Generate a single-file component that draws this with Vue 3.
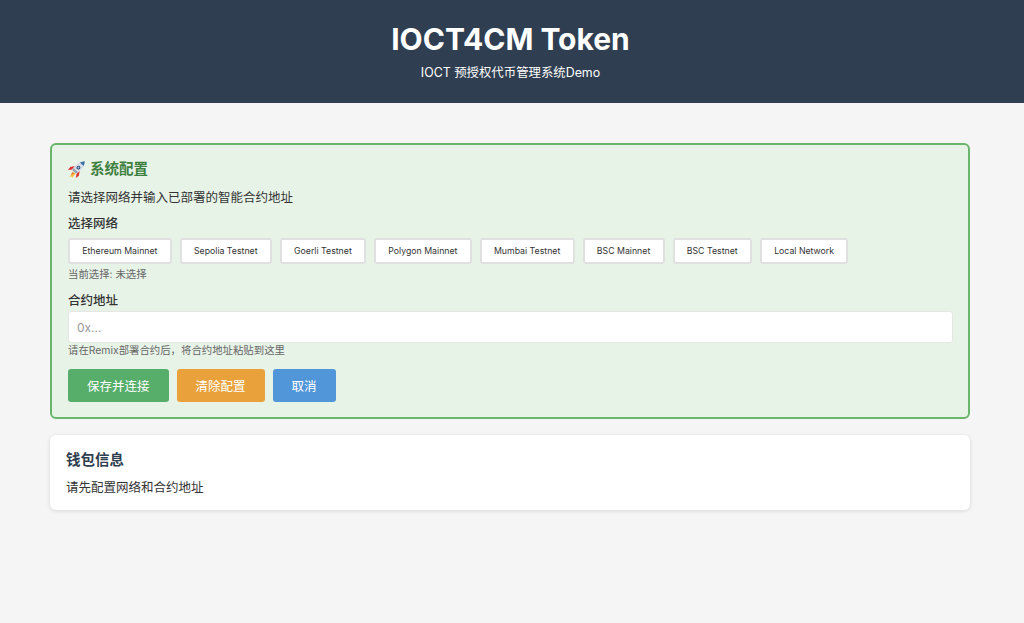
<script setup>
const networks = [
  'Ethereum Mainnet',
  'Sepolia Testnet',
  'Goerli Testnet',
  'Polygon Mainnet',
  'Mumbai Testnet',
  'BSC Mainnet',
  'BSC Testnet',
  'Local Network',
];
</script>

<template>
  <div class="page">
    <header class="header">
      <h1>IOCT4CM Token</h1>
      <p>IOCT 预授权代币管理系统Demo</p>
    </header>

    <main class="content">
      <section class="card config">
        <h2 class="config-title">
          <svg class="rocket" viewBox="0 0 16 16" width="17" height="17" aria-hidden="true">
            <path d="M4.6 10.2 1.4 15.4l2.2-.7.4 1 3.2-4z" fill="#f7c04a" />
            <path d="M4.3 10.4 2.6 13.4l3-1.6z" fill="#ee6a2c" />
            <path d="M6.4 4.8 2.2 5.6 0 8.4l3.8-.3z" fill="#dc2f2a" />
            <path d="M11 9.4 10.2 13.8 7.4 16l.6-3.8z" fill="#dc2f2a" />
            <path d="M15.8.2c-3.8.2-6.8 1.8-9 4.6L4 8.4l3.6 3.6 3.6-2.8c2.8-2.2 4.4-5.2 4.6-9z" fill="#d5dce6" />
            <path d="M15.8.2c-1.7.1-3.2.5-4.6 1.1l3.5 3.5c.6-1.4 1-2.9 1.1-4.6z" fill="#3f6ea8" />
            <path d="M5.4 6.8 4 8.4l3.6 3.6 1.6-1.3z" fill="#93a1b5" />
            <circle cx="9.8" cy="6.2" r="1.8" fill="#2c3f5a" />
            <circle cx="9.8" cy="6.2" r="1.05" fill="#86c3f0" />
          </svg>
          <span>系统配置</span>
        </h2>
        <p class="intro">请选择网络并输入已部署的智能合约地址</p>

        <div class="field">
          <label class="label">选择网络</label>
          <div class="networks">
            <button v-for="name in networks" :key="name" class="network-btn">{{ name }}</button>
          </div>
          <div class="hint">当前选择: 未选择</div>
        </div>

        <div class="field">
          <label class="label">合约地址</label>
          <input class="address" type="text" placeholder="0x..." />
          <div class="hint">请在Remix部署合约后，将合约地址粘贴到这里</div>
        </div>

        <div class="actions">
          <button class="action save">保存并连接</button>
          <button class="action clear">清除配置</button>
          <button class="action cancel">取消</button>
        </div>
      </section>

      <section class="card wallet">
        <h2>钱包信息</h2>
        <p>请先配置网络和合约地址</p>
      </section>
    </main>
  </div>
</template>

<style>
html,
body {
  margin: 0;
  background: #f5f5f5;
}
</style>

<style scoped>
.page {
  min-height: 623px;
  background: #f5f5f5;
  color: #333;
  font-family: Inter, "Liberation Sans", "Noto Sans CJK SC", sans-serif;
}

.header {
  height: 103px;
  box-sizing: border-box;
  padding: 20px 3px 0 0;
  background: #2f3e50;
  color: #fff;
  text-align: center;
}

.header h1 {
  margin: 0;
  font-size: 30px;
  line-height: 39px;
  font-weight: 700;
}

.header p {
  margin: 6px 0 0;
  font-size: 12.4px;
  line-height: 15px;
}

.content {
  display: flex;
  flex-direction: column;
  gap: 16px;
  padding: 40px 54px 0 50px;
}

.card {
  border-radius: 6px;
  box-sizing: border-box;
}

.config {
  height: 276px;
  padding: 15px 15px 0 16px;
  background: #e8f3e8;
  border: 2px solid #6ab56c;
}

.config-title {
  display: flex;
  align-items: center;
  gap: 5px;
  margin: 0 0 11px;
  font-size: 14.5px;
  line-height: 18px;
  font-weight: 700;
  color: #3d7f3f;
}

.rocket {
  flex: none;
}

.intro {
  margin: 0 0 9px;
  font-size: 12.5px;
  line-height: 18px;
}

.field {
  margin-bottom: 11px;
}

.label {
  display: block;
  margin-bottom: 2px;
  font-size: 12.5px;
  line-height: 16px;
  font-weight: 500;
}

.networks {
  display: flex;
  gap: 8px;
  margin: 6px 0 4px;
}

.network-btn {
  height: 26px;
  padding: 0 12.25px;
  background: #fff;
  border: 2px solid #e0e0e0;
  border-radius: 3px;
  color: #333;
  font-family: inherit;
  font-size: 8.75px;
}

.hint {
  font-size: 10.4px;
  line-height: 14px;
  color: #666;
}

.address {
  display: block;
  width: 100%;
  height: 32px;
  box-sizing: border-box;
  margin-bottom: 1px;
  padding: 0 8px;
  background: #fff;
  border: 1px solid #e6e6e6;
  border-radius: 3px;
  font-family: inherit;
  font-size: 12px;
}

.address::placeholder {
  color: #999;
}

.actions {
  display: flex;
  gap: 8px;
  margin-top: 11px;
}

.action {
  height: 33px;
  padding: 0 19px;
  border: none;
  border-radius: 3px;
  color: #fff;
  font-family: inherit;
  font-size: 12.5px;
}

.save {
  background: #57ae6b;
}

.clear {
  background: #e9a23b;
}

.cancel {
  background: #5096d9;
}

.wallet {
  height: 75px;
  padding: 16px;
  background: #fff;
  box-shadow: 0 1px 4px rgba(0, 0, 0, 0.12);
}

.wallet h2 {
  margin: 0 0 10px;
  font-size: 14.5px;
  line-height: 18px;
  font-weight: 700;
  color: #2f3e50;
}

.wallet p {
  margin: 0;
  font-size: 12.5px;
  line-height: 17px;
}
</style>
